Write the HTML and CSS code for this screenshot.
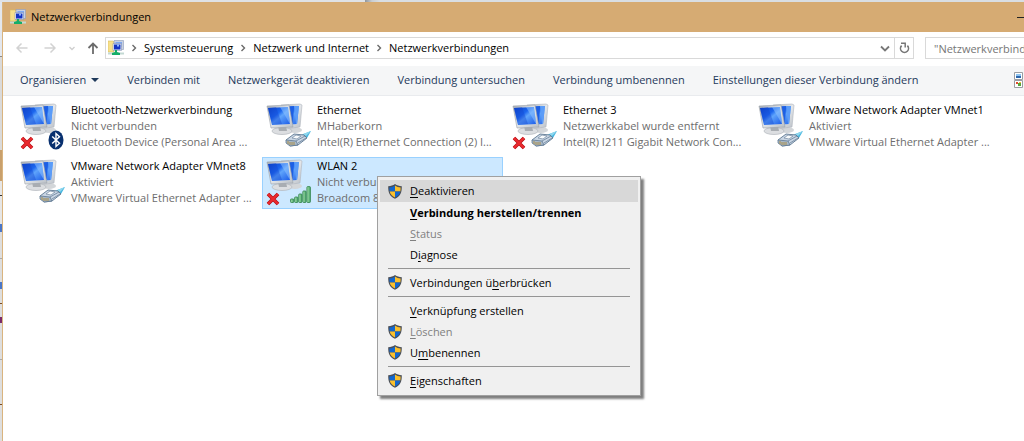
FILE: index.html
```html
<!DOCTYPE html>
<html lang="de">
<head>
    <meta charset="UTF-8">
    <meta name="viewport" content="width=device-width, initial-scale=1.0">
    <title>Netzwerkverbindungen</title>
    <link rel="stylesheet" href="styles.css">
</head>
<body>
    <!-- shared icons -->
    <svg class="sprite" aria-hidden="true">
        <defs>
            <linearGradient id="screen" x1="0" y1="0" x2="1" y2="1">
                <stop offset="0" stop-color="#0a3fc4"/>
                <stop offset="0.4" stop-color="#1c66ee"/>
                <stop offset="0.55" stop-color="#5fa4fb"/>
                <stop offset="1" stop-color="#1a5ae8"/>
            </linearGradient>
            <linearGradient id="frame" x1="0" y1="0" x2="1" y2="1">
                <stop offset="0" stop-color="#a4abb4"/>
                <stop offset="0.5" stop-color="#e4e7ea"/>
                <stop offset="1" stop-color="#b9bfc6"/>
            </linearGradient>
            <linearGradient id="bar" x1="0" y1="0" x2="1" y2="0">
                <stop offset="0" stop-color="#a5dfae"/>
                <stop offset="1" stop-color="#4aa86a"/>
            </linearGradient>
        </defs>
        <symbol id="monitors" viewBox="0 0 46 48">
            <ellipse cx="29" cy="28" rx="7" ry="3" fill="#d3d6d9"/>
            <path d="M15 3 34 2 36 3 34 25 18 27z" fill="url(#frame)" stroke="#b0b6bd" stroke-width=".6"/>
            <path d="M17 5 33 4 31 22 18 23z" fill="url(#screen)"/>
            <path d="M17 5 28 4 27 21 18 23z" fill="#1d5fe4"/>
            <path d="M28 4 33 4 31 22 30 22z" fill="#5b9cf8"/>
            <ellipse cx="16" cy="29" rx="10" ry="3.500" fill="#dcdee1" stroke="#b3b8bd" stroke-width=".7"/>
            <path d="M12 24h8l1 5h-8z" fill="#a9adb2"/>
            <path d="M1 4 23 3 27 25 5 26z" fill="url(#frame)" stroke="#9aa1a9" stroke-width=".6"/>
            <path d="M2 6 22 5 24 22 6 23z" fill="url(#screen)"/>
            <path d="M14 5 22 5 24 22z" fill="#8cc1ff" opacity=".55"/>
            <path d="M2 6 10 5 16 22 6 23z" fill="#1547cf" opacity=".4"/>
        </symbol>
        <symbol id="cross" viewBox="0 0 14 14">
            <path d="M2 2 12 12M12 2 2 12" fill="none" stroke="#b40f14" stroke-width="3.600"/>
            <path d="M2 2 12 12M12 2 2 12" fill="none" stroke="#ea2a2f" stroke-width="2.400"/>
        </symbol>
        <symbol id="bluetooth" viewBox="0 0 16 20">
            <ellipse cx="8" cy="10" rx="7.500" ry="9.600" fill="#08306f"/>
            <path d="M4.200 6.400 11.500 13.300 8 16.500V3.500L11.500 6.700 4.200 13.600" fill="none" stroke="#fff" stroke-width="1.400"/>
        </symbol>
        <symbol id="plug" viewBox="0 0 26 16">
            <path d="M16 4 26 0 22 7 19 7z" fill="#45b5df"/>
            <path d="M18 3 26 0 21 5z" fill="#8fd7ee"/>
            <path d="M1 9 9 3 19 4 22 7 13 14 5 15z" fill="#c9d6e4" stroke="#5f7892" stroke-width=".9"/>
            <path d="M1 9 11 10 13 14 5 15 1 12z" fill="#a9b9c9" stroke="#5f7892" stroke-width=".8"/>
            <path d="M3 10v3M5 11v3M7 11v3M9 11v3" stroke="#a98a3c" stroke-width=".9"/>
            <path d="M7 7 11 4 16 5 12 8z" fill="#f7fafc" stroke="#7388a0" stroke-width=".7"/>
            <path d="M11 10 20 5M13 12 21 7" stroke="#6b829b" stroke-width=".8"/>
        </symbol>
        <symbol id="signal" viewBox="0 0 21 17">
            <g fill="url(#bar)" stroke="#2c8049" stroke-width=".8">
                <rect x=".5" y="13" width="3.300" height="3.500" rx=".8"/>
                <rect x="4.600" y="11" width="3.300" height="5.500" rx=".8"/>
                <rect x="8.700" y="8" width="3.300" height="8.500" rx=".8"/>
                <rect x="12.800" y="5" width="3.300" height="11.500" rx=".8"/>
                <rect x="16.900" y=".6" width="3.500" height="15.900" rx=".8"/>
            </g>
        </symbol>
        <symbol id="shield" viewBox="0 0 14 15">
            <path d="M7 0C5 1.600 3 2 .2 2.200c0 6.300 1 9.800 6.800 12.600 5.800-2.800 6.800-6.300 6.800-12.600C11 2 9 1.600 7 0z" fill="#4b4f57"/>
            <path d="M7 1.500V7.500H1.700C1.400 6.200 1.400 5 1.400 3.400 3.500 3.300 5.400 2.800 7 1.500z" fill="#1267cf"/>
            <path d="M7 1.500V7.500h5.300c.3-1.300.3-2.500.3-4.100C10.500 3.300 8.600 2.800 7 1.500z" fill="#fbc02c"/>
            <path d="M7 7.500v6C3.700 11.900 2.200 10 1.700 7.500z" fill="#fbc02c"/>
            <path d="M7 7.500v6c3.300-1.600 4.800-3.500 5.300-6z" fill="#1267cf"/>
        </symbol>
        <symbol id="netfolder" viewBox="0 0 16 16">
            <path d="M0 1h5l1 1v10H0z" fill="#f7e08a" stroke="#d9bd5a" stroke-width=".6"/>
            <path d="M6 .500h9.500v9H6z" fill="#c9d2e2" stroke="#8d9ab8" stroke-width=".6"/>
            <path d="M7.500 2h6.500v5H7.500z" fill="#7ea9f2"/>
            <path d="M5 3.500h8.500v7H5z" fill="#e6ebf4" stroke="#7684a8" stroke-width=".5"/>
            <path d="M6 4.500h6.500v5H6z" fill="#1434c4"/>
            <path d="M9 4.500h2v2H9z" fill="#8db8ff"/>
            <path d="M0 13.500h16" stroke="#c3d9d3" stroke-width="2"/>
            <path d="M7 10h2v2l3 1v2H4v-2l3-1z" fill="#14ae68"/>
        </symbol>
        <symbol id="chevron" viewBox="0 0 6 8">
            <path d="M1.500 1 4.500 4 1.500 7" fill="none" stroke="#6a6a6a" stroke-width="1.400"/>
        </symbol>
    </svg>

    <div class="window">
        <header class="titlebar">
            <svg class="icon-16"><use href="#netfolder"/></svg>
            <h1>Netzwerkverbindungen</h1>
            <button class="minimize" aria-label="Minimieren"></button>
        </header>

        <nav class="navbar">
            <button class="nav-button" aria-label="Zurück">
                <svg width="12" height="12" viewBox="0 0 12 12"><path d="M11.500 6H1M5.500 1.500 1 6l4.500 4.500" fill="none" stroke="#d2d2d2" stroke-width="1.500"/></svg>
            </button>
            <button class="nav-button" aria-label="Vorwärts">
                <svg width="12" height="12" viewBox="0 0 12 12"><path d="M.500 6H11M6.500 1.500 11 6l-4.500 4.500" fill="none" stroke="#d2d2d2" stroke-width="1.500"/></svg>
            </button>
            <button class="nav-button history" aria-label="Zuletzt besucht">
                <svg width="6" height="5" viewBox="0 0 6 5"><path d="M.500 1 3 3.500 5.500 1" fill="none" stroke="#cfcfcf" stroke-width="1.300"/></svg>
            </button>
            <button class="nav-button up" aria-label="Nach oben">
                <svg width="12" height="12" viewBox="0 0 12 12"><path d="M6 12V1.500M1.500 6 6 1.500 10.500 6" fill="none" stroke="#6c6c6c" stroke-width="1.800"/></svg>
            </button>
            <div class="address">
                <svg class="icon-16"><use href="#netfolder"/></svg>
                <svg class="chevron"><use href="#chevron"/></svg>
                <a href="#">Systemsteuerung</a>
                <svg class="chevron"><use href="#chevron"/></svg>
                <a href="#">Netzwerk und Internet</a>
                <svg class="chevron"><use href="#chevron"/></svg>
                <a href="#">Netzwerkverbindungen</a>
                <button class="address-button drop" aria-label="Vorherige Orte">
                    <svg width="10" height="7" viewBox="0 0 10 7"><path d="M1 1.500 5 5.500 9 1.500" fill="none" stroke="#777" stroke-width="1.800"/></svg>
                </button>
                <button class="address-button refresh" aria-label="Aktualisieren">
                    <svg width="11" height="12" viewBox="0 0 11 12"><path d="M2.600 3.600A4 4 0 1 0 8.400 3.600" fill="none" stroke="#777" stroke-width="1.600"/><path d="M2 1.200H6.200V5.400" fill="none" stroke="#777" stroke-width="1.500"/></svg>
                </button>
            </div>
            <input class="search" type="text" placeholder="&quot;Netzwerkverbindungen&quot; durchsuchen" aria-label="Netzwerkverbindungen durchsuchen">
        </nav>

        <div class="commandbar">
            <button>Organisieren <span class="caret"></span></button>
            <button>Verbinden mit</button>
            <button>Netzwerkgerät deaktivieren</button>
            <button>Verbindung untersuchen</button>
            <button>Verbindung umbenennen</button>
            <button>Einstellungen dieser Verbindung ändern</button>
            <button class="view" aria-label="Ansicht ändern">
                <svg width="10" height="16" viewBox="0 0 10 16">
                    <path d="M.500.500h8v7h-8zM.500 8.500h8v7h-8z" fill="#fff" stroke="#9a9da2"/>
                    <path d="M2 2h5v2H2z" fill="#8dc4f2"/><path d="M2 4h5v2H2z" fill="#2c66ad"/>
                    <path d="M2 10h2v2H2z" fill="#e04a2c"/><path d="M4 11h3v3H4z" fill="#57a63c"/><path d="M5 10h2v1H5z" fill="#f1bb34"/>
                </svg>
            </button>
        </div>

        <main class="connections">
            <article class="connection">
                <div class="device">
                    <svg class="monitors"><use href="#monitors"/></svg>
                    <svg class="cross"><use href="#cross"/></svg>
                    <svg class="bluetooth"><use href="#bluetooth"/></svg>
                </div>
                <div class="details">
                    <h2>Bluetooth-Netzwerkverbindung</h2>
                    <p>Nicht verbunden</p>
                    <p>Bluetooth Device (Personal Area ...</p>
                </div>
            </article>
            <article class="connection">
                <div class="device">
                    <svg class="monitors"><use href="#monitors"/></svg>
                    <svg class="plug"><use href="#plug"/></svg>
                </div>
                <div class="details">
                    <h2>Ethernet</h2>
                    <p>MHaberkorn</p>
                    <p>Intel(R) Ethernet Connection (2) I...</p>
                </div>
            </article>
            <article class="connection">
                <div class="device">
                    <svg class="monitors"><use href="#monitors"/></svg>
                    <svg class="cross"><use href="#cross"/></svg>
                    <svg class="plug"><use href="#plug"/></svg>
                </div>
                <div class="details">
                    <h2>Ethernet 3</h2>
                    <p>Netzwerkkabel wurde entfernt</p>
                    <p>Intel(R) I211 Gigabit Network Con...</p>
                </div>
            </article>
            <article class="connection">
                <div class="device">
                    <svg class="monitors"><use href="#monitors"/></svg>
                    <svg class="plug"><use href="#plug"/></svg>
                </div>
                <div class="details">
                    <h2>VMware Network Adapter VMnet1</h2>
                    <p>Aktiviert</p>
                    <p>VMware Virtual Ethernet Adapter ...</p>
                </div>
            </article>
            <article class="connection">
                <div class="device">
                    <svg class="monitors"><use href="#monitors"/></svg>
                    <svg class="plug"><use href="#plug"/></svg>
                </div>
                <div class="details">
                    <h2>VMware Network Adapter VMnet8</h2>
                    <p>Aktiviert</p>
                    <p>VMware Virtual Ethernet Adapter ...</p>
                </div>
            </article>
            <article class="connection selected">
                <div class="device">
                    <svg class="monitors"><use href="#monitors"/></svg>
                    <svg class="cross"><use href="#cross"/></svg>
                    <svg class="signal"><use href="#signal"/></svg>
                </div>
                <div class="details">
                    <h2>WLAN 2</h2>
                    <p>Nicht verbunden</p>
                    <p>Broadcom 802.11</p>
                </div>
                <div class="context-menu">
                    <button class="active"><svg class="shield"><use href="#shield"/></svg><span><u>D</u>eaktivieren</span></button>
                    <button class="default"><span><u>V</u>erbindung herstellen/trennen</span></button>
                    <button disabled><span><u>S</u>tatus</span></button>
                    <button><span>D<u>i</u>agnose</span></button>
                    <hr>
                    <button><svg class="shield"><use href="#shield"/></svg><span>Verbindungen ü<u>b</u>erbrücken</span></button>
                    <hr>
                    <button><span><u>V</u>erknüpfung erstellen</span></button>
                    <button disabled><svg class="shield"><use href="#shield"/></svg><span><u>L</u>öschen</span></button>
                    <button><svg class="shield"><use href="#shield"/></svg><span>U<u>m</u>benennen</span></button>
                    <hr>
                    <button><svg class="shield"><use href="#shield"/></svg><span><u>E</u>igenschaften</span></button>
                </div>
            </article>
        </main>
    </div>
</body>
</html>
```
FILE: styles.css
```css
* {
    box-sizing: border-box;
}
body {
    margin: 0;
    padding: 2px 0 0 2px;
    min-height: 100vh;
    font-family: "Open Sans", "Noto Sans", sans-serif;
    font-size: 11px;
    line-height: 16px;
    color: #000;
    /* other windows showing along the top and left edges */
    background:
        linear-gradient(90deg, #dfe2e6 365px, #8f959c 365px, #c9ced3 372px, #d9dee3 380px) 0 0 / 100% 2px no-repeat,
        linear-gradient(#e3e7ee 56px, #8a8a8a 56px, #8a8a8a 57px, #dadada 57px, #dadada 150px,
            #c9a06c 150px, #c9a06c 181px, #e6e6e6 181px, #e6e6e6 195px, #333 195px, #333 196px,
            #e6e6e6 196px, #e6e6e6 224px, #4a76c8 224px, #4a76c8 232px, #dedede 232px, #dedede 258px,
            #aaa 258px, #aaa 259px, #dedede 259px, #dedede 282px, #4a76c8 282px, #4a76c8 289px,
            #dedede 289px, #dedede 303px, #7a4b22 303px, #7a4b22 304px, #dedede 304px, #dedede 317px,
            #7a2a6a 317px, #7a2a6a 323px, #dedede 323px, #dedede 359px, #aaa 359px, #aaa 360px,
            #dedede 360px, #dedede 404px, #7a4b22 404px, #7a4b22 405px, #dedede 405px);
}
button {
    padding: 0;
    border: 0;
    background: none;
    color: inherit;
    font: inherit;
    white-space: nowrap;
}
h1,
h2,
p {
    margin: 0;
    font-size: inherit;
    font-weight: normal;
}
svg {
    display: block;
    flex: none;
}
.sprite {
    position: absolute;
    width: 0;
    height: 0;
}
.icon-16 {
    width: 16px;
    height: 16px;
}

.window {
    min-height: calc(100vh - 2px);
    border-left: 1px solid #d9b47f;
    background: #fff;
}
.titlebar {
    display: flex;
    align-items: center;
    gap: 5px;
    height: 30px;
    padding-left: 7px;
    background: #d6ab73;
}
.minimize {
    width: 7px;
    height: 1px;
    margin-left: auto;
    background: #222;
}

.navbar {
    display: flex;
    align-items: center;
    height: 34px;
    padding: 0 0 2px 5px;
}
.nav-button {
    display: flex;
    align-items: center;
    justify-content: center;
    width: 28px;
    height: 22px;
}
.nav-button.history {
    width: 16px;
}
.nav-button.up {
    width: 25px;
}
.address {
    display: flex;
    align-items: center;
    flex: 1;
    height: 22px;
    padding-left: 2px;
    border: 1px solid #d9d9d9;
}
.address a {
    color: inherit;
    text-decoration: none;
}
.chevron {
    width: 6px;
    height: 8px;
    margin: 0 7px;
}
.address-button {
    display: flex;
    align-items: center;
    justify-content: center;
    width: 19px;
    height: 20px;
}
.address-button.drop {
    margin-left: auto;
}
.address-button.refresh {
    border-left: 1px solid #d9d9d9;
}
.search {
    width: 99px;
    height: 22px;
    margin-left: 11px;
    padding: 0 0 0 8px;
    border: 1px solid #d9d9d9;
    border-right: 0;
    font: inherit;
}
.search::placeholder {
    color: #767676;
}

.commandbar {
    display: flex;
    align-items: center;
    gap: 28px;
    height: 30px;
    padding: 0 0 2px 17px;
    border-bottom: 1px solid #e9ebee;
    background: #f5f6f7;
    color: #1e395b;
}
.caret {
    display: inline-block;
    margin-left: 2px;
    border: 4px solid transparent;
    border-top-color: #1e395b;
    border-bottom: 0;
    vertical-align: 2px;
}
.view {
    margin-left: auto;
}

.connections {
    display: grid;
    grid-template-columns: repeat(auto-fill, 241px);
    gap: 4px 5px;
    padding: 5px 13px;
}
.connection {
    position: relative;
    display: flex;
    gap: 5px;
    height: 52px;
    padding: 0 3px;
    border: 1px solid transparent;
}
.connection.selected {
    border-color: #99d1ff;
    background: #cce8ff;
}
.device {
    position: relative;
    flex: none;
    width: 46px;
    height: 48px;
}
.monitors {
    width: 46px;
    height: 48px;
}
/* status badges over the monitors */
.cross,
.bluetooth,
.plug,
.signal {
    position: absolute;
    bottom: 0;
}
.cross {
    left: 0;
    width: 14px;
    height: 14px;
}
.bluetooth {
    right: 2px;
    width: 16px;
    height: 20px;
}
.plug {
    right: 1px;
    bottom: 3px;
    width: 26px;
    height: 16px;
}
.signal {
    right: 1px;
    bottom: 3px;
    width: 21px;
    height: 17px;
}
.details {
    min-width: 0;
    white-space: nowrap;
}
.details p {
    color: #6d6d6d;
}

.context-menu {
    position: absolute;
    top: 18px;
    left: 114px;
    z-index: 1;
    width: 264px;
    padding: 3px 2px 4px;
    border: 1px solid #a0a0a0;
    background: #f0f0f0;
    box-shadow: 3px 3px 2px rgba(0, 0, 0, 0.5);
}
.context-menu button {
    display: grid;
    grid-template-columns: 14px 1fr;
    align-items: center;
    column-gap: 8px;
    width: 100%;
    height: 21px;
    padding: 0 8px;
    text-align: left;
}
.context-menu span {
    grid-column: 2;
}
.context-menu .active {
    height: 22px;
    background: #d8d8d8;
}
.context-menu .default {
    font-weight: bold;
}
.context-menu button:disabled {
    color: #808080;
}
.context-menu u {
    text-underline-offset: 2px;
}
.context-menu hr {
    height: 1px;
    margin: 3px 8px;
    border: 0;
    background: #959595;
}
.shield {
    width: 14px;
    height: 15px;
}
```
